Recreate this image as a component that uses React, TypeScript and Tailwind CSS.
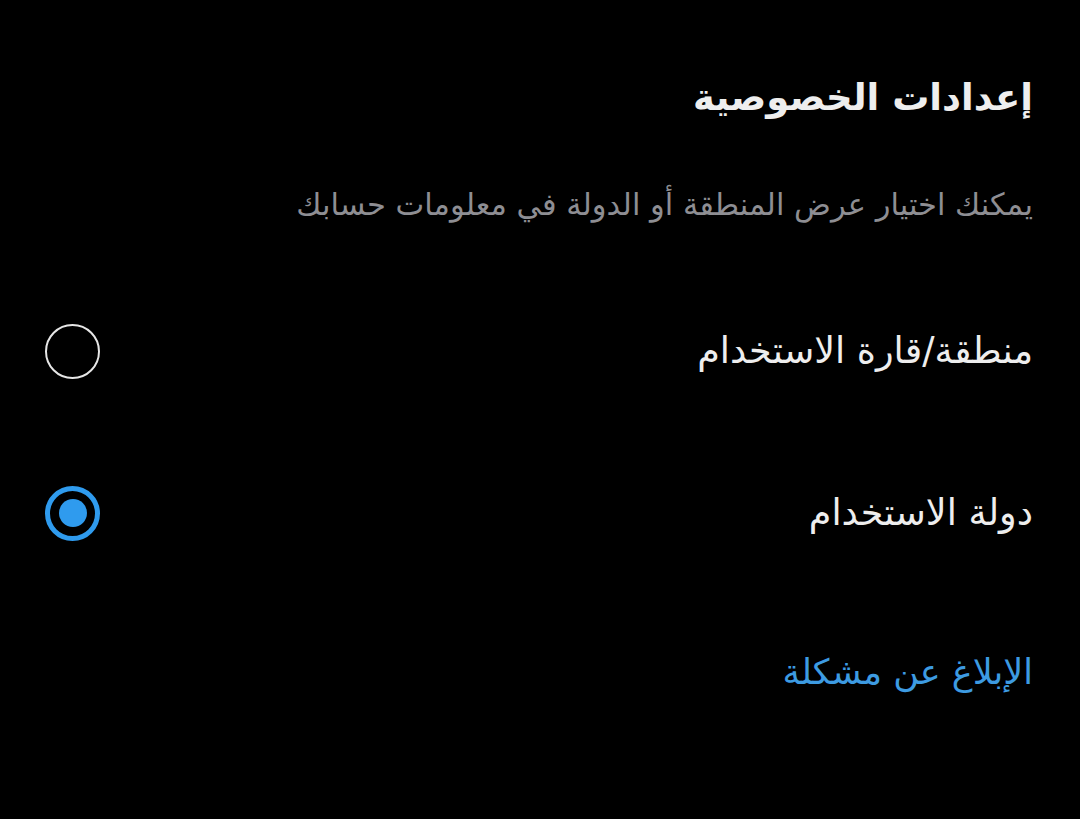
import React from "react";

const font = { fontFamily: '"DejaVu Sans", "Noto Sans", sans-serif' };

function Radio({ checked }: { checked: boolean }) {
  if (checked) {
    return (
      <div className="w-[55px] h-[55px] rounded-full border-[5px] border-[#2f9bee] flex items-center justify-center shrink-0">
        <div className="w-[28px] h-[28px] rounded-full bg-[#2f9bee]" />
      </div>
    );
  }
  return <div className="w-[55px] h-[55px] rounded-full border-[2.5px] border-[#e6e6e6] shrink-0" />;
}

export default function App() {
  return (
    <div dir="rtl" className="w-[1080px] h-[819px] bg-black overflow-hidden pt-[54px] pr-[47px] pl-[45px]" style={font}>
      <div className="h-[86px] flex items-center">
        <h1 className="text-[37px] font-bold text-[#eeeeee] leading-none">إعدادات الخصوصية</h1>
      </div>
      <div className="h-[130px] flex items-center">
        <p className="text-[30.5px] text-[#8e8e93] leading-none">يمكنك اختيار عرض المنطقة أو الدولة في معلومات حسابك</p>
      </div>
      <div className="h-[162px] flex items-center justify-between">
        <span className="text-[36.5px] text-[#eeeeee] leading-none">منطقة/قارة الاستخدام</span>
        <Radio checked={false} />
      </div>
      <div className="h-[162px] flex items-center justify-between">
        <span className="text-[36.5px] text-[#eeeeee] leading-none">دولة الاستخدام</span>
        <Radio checked={true} />
      </div>
      <div className="h-[156px] flex items-center">
        <span className="text-[35px] text-[#3d9be2] leading-none">الإبلاغ عن مشكلة</span>
      </div>
    </div>
  );
}
